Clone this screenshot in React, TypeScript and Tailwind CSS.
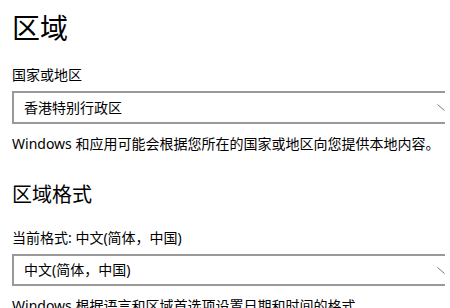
export default function App() {
  const font = { fontFamily: '"Noto Sans", "Noto Sans CJK SC", sans-serif' };
  return (
    <div
      className="w-[450px] h-[308px] overflow-hidden bg-white text-black pl-[12px]"
      style={font}
    >
      <h1 className="mt-[10px] text-[28px] leading-[36px] font-normal">区域</h1>

      <div className="mt-[19px] text-[14px] leading-[20px]">国家或地区</div>
      <Dropdown value="香港特别行政区" className="mt-[6px] h-[33px]" />

      <p className="mt-[10px] text-[14px] leading-[20px] whitespace-nowrap">
        Windows 和应用可能会根据您所在的国家或地区向您提供本地内容。
      </p>

      <h2 className="mt-[27px] text-[20px] leading-[28px] font-normal">区域格式</h2>

      <div className="mt-[19px] text-[14px] leading-[20px]">当前格式: 中文(简体，中国)</div>
      <Dropdown value="中文(简体，中国)" className="mt-[6px] h-[32px]" />

      <p className="mt-[10px] text-[14px] leading-[20px] whitespace-nowrap">
        Windows 根据语言和区域首选项设置日期和时间的格式。
      </p>
    </div>
  );
}

function Dropdown({ value, className }: { value: string; className: string }) {
  return (
    <div
      className={`w-[433px] flex items-center justify-between border-l-2 border-y-2 border-[#999999] pl-[10px] ${className}`}
    >
      <span className="text-[14px] leading-[20px]">{value}</span>
      <svg width="8" height="7" viewBox="0 0 8 7" className="mr-0">
        <path d="M0.5 0.5 L7.5 6.5" stroke="#7a7a7a" strokeWidth="1" fill="none" />
      </svg>
    </div>
  );
}
